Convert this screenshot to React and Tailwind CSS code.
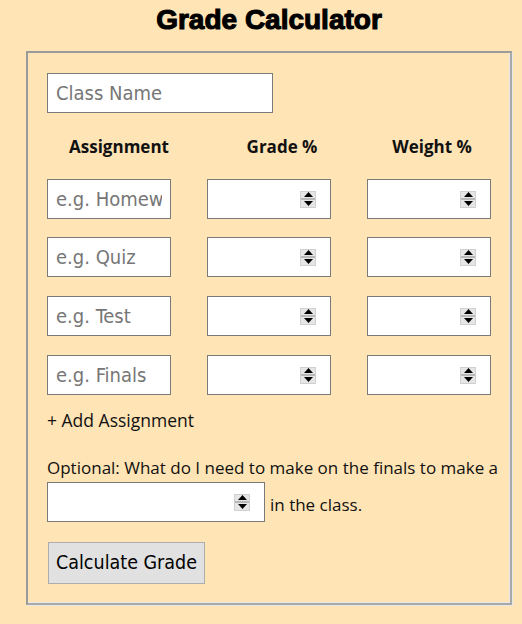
import React from "react";

function Spinner() {
  return (
    <div className="flex h-[17px] w-[16px] flex-col border border-[#d0d0d0] bg-[#e6e6e6]">
      <div className="flex flex-1 items-center justify-center">
        <svg width="9" height="5" viewBox="0 0 9 5"><polygon points="0,5 9,5 4.5,0" fill="#000" /></svg>
      </div>
      <div className="h-[2px] bg-[#b8b8b8]" />
      <div className="flex flex-1 items-center justify-center">
        <svg width="9" height="5" viewBox="0 0 9 5"><polygon points="0,0 9,0 4.5,5" fill="#000" /></svg>
      </div>
    </div>
  );
}

function NumBox({ w = "w-[124px]" }) {
  return (
    <div className={`flex h-[40px] ${w} items-center border border-[#7a7a7a] bg-white pr-[14px]`}>
      <input className="h-full min-w-0 flex-1 bg-transparent px-2 outline-none" />
      <Spinner />
    </div>
  );
}

function TextBox({ placeholder, w = "w-[124px]" }) {
  return (
    <input
      placeholder={placeholder}
      className={`h-[40px] ${w} border border-[#7a7a7a] bg-white px-[8px] text-[20px] text-black outline-none placeholder:text-[#767676] [font-family:'DejaVu_Sans_Condensed','DejaVu_Sans',sans-serif]`}
    />
  );
}

export default function App() {
  const rows = [
    { p: "e.g. Homework", mt: "mt-0" },
    { p: "e.g. Quiz", mt: "mt-[18px]" },
    { p: "e.g. Test", mt: "mt-[19px]" },
    { p: "e.g. Finals", mt: "mt-[19px]" },
  ];
  return (
    <div className="min-h-[624px] w-full bg-[#ffe4b5] text-[#111] [font-family:'Open_Sans',sans-serif]">
      <div className="ml-[26px] w-[486px]">
        <div className="flex h-[51px] items-start justify-center pt-[4px]">
          <h1 className="text-[28px] font-bold leading-[32px] text-black [-webkit-text-stroke:1.1px_black] [font-family:'Liberation_Sans',Arial,sans-serif]">
            Grade Calculator
          </h1>
        </div>
        <div className="border-2 border-t-[#9a9a9a] border-l-[#9a9a9a] border-r-[#a8a8a8] border-b-[#a8a8a8] px-[19px] pt-[20px] pb-[19px] shadow-[inset_-1px_-1px_0_#e8e8e8,1px_1px_0_#e8e8e8]">
          <TextBox placeholder="Class Name" w="w-[226px]" />
          <div className="flex h-[66px] items-center pt-[2px] text-[17px] font-bold">
            <div className="w-[124px] pl-[20px] text-center">Assignment</div>
            <div className="ml-[36px] w-[124px] pl-[26px] text-center">Grade %</div>
            <div className="ml-[36px] w-[124px] pl-[6px] text-center">Weight %</div>
          </div>
          {rows.map((r) => (
            <div key={r.p} className={`flex gap-[36px] ${r.mt}`}>
              <TextBox placeholder={r.p} />
              <NumBox />
              <NumBox />
            </div>
          ))}
          <div className="mt-[14px] h-[22px] text-[17.5px] leading-[22px]">+ Add Assignment</div>
          <div className="mt-[26px] h-[22px] whitespace-nowrap text-[17px] leading-[22px]">
            Optional: What do I need to make on the finals to make a
          </div>
          <div className="mt-[3px] flex items-center gap-[5px]">
            <NumBox w="w-[218px]" />
            <span className="text-[17px] pt-[6px]">in the class.</span>
          </div>
          <button className="ml-[1px] mt-[20px] h-[42px] w-[157px] border border-[#adadad] bg-[#e1e1e1] text-[19.5px] text-black [font-family:'DejaVu_Sans_Condensed','DejaVu_Sans',sans-serif]">
            Calculate Grade
          </button>
        </div>
      </div>
    </div>
  );
}
